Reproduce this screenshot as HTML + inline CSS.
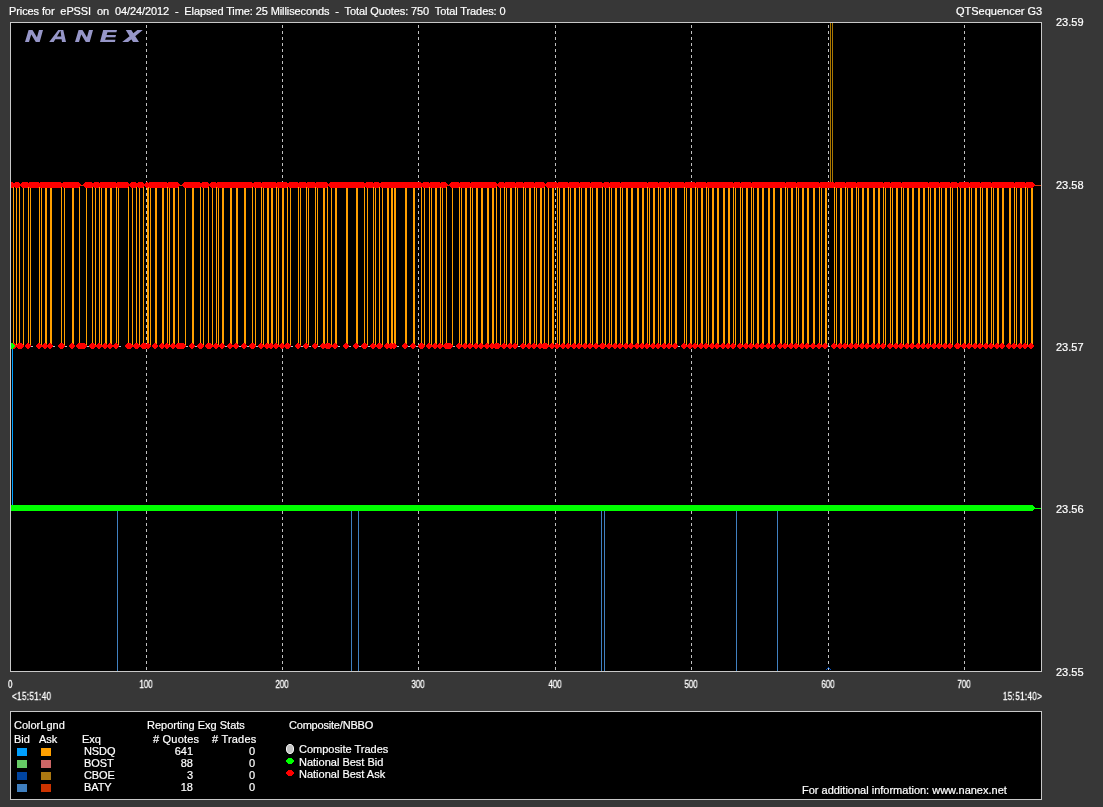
<!DOCTYPE html>
<html><head><meta charset="utf-8">
<style>
html,body{margin:0;padding:0;background:#373737;width:1103px;height:807px;overflow:hidden;}
body{position:relative;font-family:"Liberation Sans",sans-serif;color:#fff;}
.t{position:absolute;white-space:pre;font-size:11px;line-height:11px;will-change:transform;-webkit-text-stroke:0.2px #fff;}
.s{position:absolute;white-space:pre;font-size:10px;line-height:10px;transform:scaleX(0.8);will-change:transform;-webkit-text-stroke:0.3px #fff;}
.r{text-align:right;}
.c{text-align:center;}
svg{position:absolute;left:0;top:0;}
</style></head><body>
<svg width="1103" height="807" shape-rendering="crispEdges">
<rect x="10" y="22" width="1032" height="650" fill="#c8c8c8"/>
<rect x="11" y="23" width="1030" height="648" fill="#000"/>
<defs><clipPath id="cp"><rect x="11" y="23" width="1030" height="648"/></clipPath></defs>
<g clip-path="url(#cp)">
<g fill="#9696c8" shape-rendering="geometricPrecision">
<path d="M25 42L28.6 30H32.5L29 42Z M35.6 42L39 30H43L39.7 42Z M28.6 30H32.5L39.7 42H35.8Z"/>
<path d="M75 42L78.6 30H82.5L79 42Z M85.6 42L89 30H93L89.7 42Z M78.6 30H82.5L89.7 42H85.8Z"/>
<path d="M49.2 42L58.3 30H60.8L53.7 42Z M62 42L60.4 30H63.3L66 42Z M52 39.2L54 36.6H62.1L62.6 39.2Z"/>
<path d="M100 42L103.2 30H117L116.4 32.2H107.5L106.6 35H116L115.4 37.3H106L105.1 39.7H115.4L115 42Z"/>
<path d="M125.8 30H131.3L139 42H133Z M137.4 30H142.8L128.1 42H122.2Z"/>
</g>
<path d="M146 25V671M282 25V671M418 25V671M555 25V671M691 25V671M828 25V671M964 25V671" stroke="#c0c0c0" stroke-width="1" stroke-dasharray="3 3" transform="translate(0.5 0)"/>
<path d="M830 22h1v161h-1ZM832 22h1v161h-1Z" fill="#aa7700"/>
<path d="M13 185h1v161h-1ZM16 185h1v161h-1ZM19 185h1v161h-1ZM23 185h1v161h-1ZM28 185h1v161h-1ZM30 185h1v161h-1ZM39 185h1v161h-1ZM41 185h1v161h-1ZM45 185h1v161h-1ZM46 185h1v161h-1ZM50 185h1v161h-1ZM51 185h1v161h-1ZM61 185h1v161h-1ZM64 185h1v161h-1ZM72 185h1v161h-1ZM73 185h1v161h-1ZM79 185h1v161h-1ZM86 185h1v161h-1ZM92 185h1v161h-1ZM95 185h1v161h-1ZM99 185h1v161h-1ZM101 185h1v161h-1ZM105 185h1v161h-1ZM106 185h1v161h-1ZM110 185h1v161h-1ZM111 185h1v161h-1ZM116 185h1v161h-1ZM118 185h1v161h-1ZM128 185h1v161h-1ZM132 185h1v161h-1ZM136 185h1v161h-1ZM139 185h1v161h-1ZM143 185h1v161h-1ZM147 185h1v161h-1ZM148 185h1v161h-1ZM150 185h1v161h-1ZM155 185h1v161h-1ZM156 185h1v161h-1ZM162 185h1v161h-1ZM163 185h1v161h-1ZM167 185h1v161h-1ZM169 185h1v161h-1ZM173 185h1v161h-1ZM174 185h1v161h-1ZM178 185h1v161h-1ZM185 185h1v161h-1ZM192 185h1v161h-1ZM193 185h1v161h-1ZM200 185h1v161h-1ZM203 185h1v161h-1ZM208 185h1v161h-1ZM212 185h1v161h-1ZM216 185h1v161h-1ZM218 185h1v161h-1ZM222 185h1v161h-1ZM223 185h1v161h-1ZM230 185h1v161h-1ZM231 185h1v161h-1ZM236 185h1v161h-1ZM237 185h1v161h-1ZM244 185h1v161h-1ZM245 185h1v161h-1ZM252 185h1v161h-1ZM255 185h1v161h-1ZM261 185h1v161h-1ZM263 185h1v161h-1ZM267 185h1v161h-1ZM268 185h1v161h-1ZM271 185h1v161h-1ZM272 185h1v161h-1ZM276 185h1v161h-1ZM278 185h1v161h-1ZM282 185h1v161h-1ZM283 185h1v161h-1ZM287 185h1v161h-1ZM290 185h1v161h-1ZM298 185h1v161h-1ZM300 185h1v161h-1ZM306 185h1v161h-1ZM308 185h1v161h-1ZM315 185h1v161h-1ZM317 185h1v161h-1ZM323 185h1v161h-1ZM324 185h1v161h-1ZM327 185h1v161h-1ZM331 185h1v161h-1ZM335 185h1v161h-1ZM336 185h1v161h-1ZM346 185h1v161h-1ZM347 185h1v161h-1ZM356 185h1v161h-1ZM357 185h1v161h-1ZM364 185h1v161h-1ZM367 185h1v161h-1ZM373 185h1v161h-1ZM375 185h1v161h-1ZM379 185h1v161h-1ZM382 185h1v161h-1ZM387 185h1v161h-1ZM388 185h1v161h-1ZM391 185h1v161h-1ZM392 185h1v161h-1ZM394 185h1v161h-1ZM395 185h1v161h-1ZM405 185h1v161h-1ZM406 185h1v161h-1ZM413 185h1v161h-1ZM414 185h1v161h-1ZM421 185h1v161h-1ZM424 185h1v161h-1ZM429 185h1v161h-1ZM431 185h1v161h-1ZM435 185h1v161h-1ZM436 185h1v161h-1ZM440 185h1v161h-1ZM442 185h1v161h-1ZM446 185h1v161h-1ZM452 185h1v161h-1ZM459 185h1v161h-1ZM461 185h1v161h-1ZM465 185h1v161h-1ZM466 185h1v161h-1ZM470 185h1v161h-1ZM472 185h1v161h-1ZM476 185h1v161h-1ZM477 185h1v161h-1ZM481 185h1v161h-1ZM482 185h1v161h-1ZM487 185h1v161h-1ZM488 185h1v161h-1ZM492 185h1v161h-1ZM493 185h1v161h-1ZM496 185h1v161h-1ZM500 185h1v161h-1ZM504 185h1v161h-1ZM506 185h1v161h-1ZM510 185h1v161h-1ZM511 185h1v161h-1ZM515 185h1v161h-1ZM517 185h1v161h-1ZM523 185h1v161h-1ZM525 185h1v161h-1ZM529 185h1v161h-1ZM530 185h1v161h-1ZM534 185h1v161h-1ZM536 185h1v161h-1ZM540 185h1v161h-1ZM541 185h1v161h-1ZM544 185h1v161h-1ZM548 185h1v161h-1ZM552 185h1v161h-1ZM553 185h1v161h-1ZM557 185h1v161h-1ZM559 185h1v161h-1ZM563 185h1v161h-1ZM564 185h1v161h-1ZM568 185h1v161h-1ZM570 185h1v161h-1ZM574 185h1v161h-1ZM575 185h1v161h-1ZM579 185h1v161h-1ZM581 185h1v161h-1ZM585 185h1v161h-1ZM586 185h1v161h-1ZM590 185h1v161h-1ZM592 185h1v161h-1ZM596 185h1v161h-1ZM597 185h1v161h-1ZM602 185h1v161h-1ZM605 185h1v161h-1ZM609 185h1v161h-1ZM611 185h1v161h-1ZM615 185h1v161h-1ZM616 185h1v161h-1ZM620 185h1v161h-1ZM622 185h1v161h-1ZM626 185h1v161h-1ZM627 185h1v161h-1ZM631 185h1v161h-1ZM632 185h1v161h-1ZM637 185h1v161h-1ZM638 185h1v161h-1ZM642 185h1v161h-1ZM643 185h1v161h-1ZM647 185h1v161h-1ZM649 185h1v161h-1ZM653 185h1v161h-1ZM654 185h1v161h-1ZM658 185h1v161h-1ZM660 185h1v161h-1ZM664 185h1v161h-1ZM665 185h1v161h-1ZM669 185h1v161h-1ZM671 185h1v161h-1ZM675 185h1v161h-1ZM676 185h1v161h-1ZM684 185h1v161h-1ZM686 185h1v161h-1ZM690 185h1v161h-1ZM691 185h1v161h-1ZM695 185h1v161h-1ZM697 185h1v161h-1ZM701 185h1v161h-1ZM702 185h1v161h-1ZM706 185h1v161h-1ZM708 185h1v161h-1ZM712 185h1v161h-1ZM713 185h1v161h-1ZM717 185h1v161h-1ZM718 185h1v161h-1ZM723 185h1v161h-1ZM724 185h1v161h-1ZM728 185h1v161h-1ZM729 185h1v161h-1ZM733 185h1v161h-1ZM735 185h1v161h-1ZM740 185h1v161h-1ZM742 185h1v161h-1ZM746 185h1v161h-1ZM747 185h1v161h-1ZM751 185h1v161h-1ZM753 185h1v161h-1ZM757 185h1v161h-1ZM758 185h1v161h-1ZM762 185h1v161h-1ZM763 185h1v161h-1ZM768 185h1v161h-1ZM769 185h1v161h-1ZM773 185h1v161h-1ZM774 185h1v161h-1ZM780 185h1v161h-1ZM781 185h1v161h-1ZM785 185h1v161h-1ZM787 185h1v161h-1ZM791 185h1v161h-1ZM792 185h1v161h-1ZM796 185h1v161h-1ZM798 185h1v161h-1ZM802 185h1v161h-1ZM803 185h1v161h-1ZM807 185h1v161h-1ZM808 185h1v161h-1ZM813 185h1v161h-1ZM814 185h1v161h-1ZM819 185h1v161h-1ZM821 185h1v161h-1ZM825 185h1v161h-1ZM826 185h1v161h-1ZM834 185h1v161h-1ZM836 185h1v161h-1ZM840 185h1v161h-1ZM841 185h1v161h-1ZM845 185h1v161h-1ZM847 185h1v161h-1ZM851 185h1v161h-1ZM852 185h1v161h-1ZM856 185h1v161h-1ZM858 185h1v161h-1ZM862 185h1v161h-1ZM863 185h1v161h-1ZM867 185h1v161h-1ZM868 185h1v161h-1ZM873 185h1v161h-1ZM874 185h1v161h-1ZM878 185h1v161h-1ZM879 185h1v161h-1ZM883 185h1v161h-1ZM885 185h1v161h-1ZM890 185h1v161h-1ZM892 185h1v161h-1ZM896 185h1v161h-1ZM897 185h1v161h-1ZM901 185h1v161h-1ZM903 185h1v161h-1ZM907 185h1v161h-1ZM908 185h1v161h-1ZM912 185h1v161h-1ZM913 185h1v161h-1ZM918 185h1v161h-1ZM919 185h1v161h-1ZM923 185h1v161h-1ZM924 185h1v161h-1ZM928 185h1v161h-1ZM930 185h1v161h-1ZM934 185h1v161h-1ZM935 185h1v161h-1ZM939 185h1v161h-1ZM941 185h1v161h-1ZM945 185h1v161h-1ZM946 185h1v161h-1ZM950 185h1v161h-1ZM952 185h1v161h-1ZM957 185h1v161h-1ZM960 185h1v161h-1ZM964 185h1v161h-1ZM965 185h1v161h-1ZM969 185h1v161h-1ZM971 185h1v161h-1ZM975 185h1v161h-1ZM976 185h1v161h-1ZM980 185h1v161h-1ZM982 185h1v161h-1ZM986 185h1v161h-1ZM987 185h1v161h-1ZM991 185h1v161h-1ZM993 185h1v161h-1ZM997 185h1v161h-1ZM998 185h1v161h-1ZM1002 185h1v161h-1ZM1003 185h1v161h-1ZM1009 185h1v161h-1ZM1010 185h1v161h-1ZM1014 185h1v161h-1ZM1016 185h1v161h-1ZM1020 185h1v161h-1ZM1021 185h1v161h-1ZM1025 185h1v161h-1ZM1027 185h1v161h-1ZM1031 185h1v161h-1ZM1032 185h1v161h-1Z" fill="#ffa000"/>
<path d="M12 346h1v160h-1Z" fill="#00a0ff"/>
<path d="M117 511h1v160h-1ZM351 511h1v160h-1ZM358 511h1v160h-1ZM601 511h1v160h-1ZM604 511h1v160h-1ZM736 511h1v160h-1ZM777 511h1v160h-1Z" fill="#4080c0"/>
<path d="M11 185h1030v1h-1030Z" fill="#d04010"/>
<path d="M31 346h2v1h-2ZM53 346h2v1h-2ZM65 346h2v1h-2ZM87 346h2v1h-2ZM119 346h2v1h-2ZM186 346h2v1h-2ZM195 346h2v1h-2ZM225 346h2v1h-2ZM239 346h2v1h-2ZM247 346h2v1h-2ZM256 346h2v1h-2ZM291 346h2v1h-2ZM301 346h2v1h-2ZM309 346h2v1h-2ZM318 346h2v1h-2ZM338 346h2v1h-2ZM349 346h2v1h-2ZM359 346h2v1h-2ZM368 346h2v1h-2ZM397 346h2v1h-2ZM408 346h2v1h-2ZM416 346h2v1h-2ZM453 346h2v1h-2ZM518 346h2v1h-2ZM678 346h2v1h-2ZM828 346h2v1h-2Z" fill="#b8c4cc"/>
<path d="M10 182H13V183H14V184H15V186H14V187H13V188H10V187H9V186H8V184H9V183H10ZM15 182H19V183H20V184H21V186H20V187H19V188H15V187H14V186H13V184H14V183H15ZM22 182H28V183H29V184H30V186H29V187H28V188H22V187H21V186H20V184H21V183H22ZM29 182H39V183H40V184H41V186H40V187H39V188H29V187H28V186H27V184H28V183H29ZM40 182H45V183H46V184H47V186H46V187H45V188H40V187H39V186H38V184H39V183H40ZM45 182H50V183H51V184H52V186H51V187H50V188H45V187H44V186H43V184H44V183H45ZM50 182H61V183H62V184H63V186H62V187H61V188H50V187H49V186H48V184H49V183H50ZM63 182H72V183H73V184H74V186H73V187H72V188H63V187H62V186H61V184H62V183H63ZM72 182H79V183H80V184H81V186H80V187H79V188H72V187H71V186H70V184H71V183H72ZM85 182H92V183H93V184H94V186H93V187H92V188H85V187H84V186H83V184H84V183H85ZM94 182H99V183H100V184H101V186H100V187H99V188H94V187H93V186H92V184H93V183H94ZM100 182H105V183H106V184H107V186H106V187H105V188H100V187H99V186H98V184H99V183H100ZM105 182H110V183H111V184H112V186H111V187H110V188H105V187H104V186H103V184H104V183H105ZM110 182H116V183H117V184H118V186H117V187H116V188H110V187H109V186H108V184H109V183H110ZM117 182H128V183H129V184H130V186H129V187H128V188H117V187H116V186H115V184H116V183H117ZM131 182H136V183H137V184H138V186H137V187H136V188H131V187H130V186H129V184H130V183H131ZM138 182H143V183H144V184H145V186H144V187H143V188H138V187H137V186H136V184H137V183H138ZM146 182H148V183H149V184H150V186H149V187H148V188H146V187H145V186H144V184H145V183H146ZM149 182H155V183H156V184H157V186H156V187H155V188H149V187H148V186H147V184H148V183H149ZM155 182H162V183H163V184H164V186H163V187H162V188H155V187H154V186H153V184H154V183H155ZM162 182H167V183H168V184H169V186H168V187H167V188H162V187H161V186H160V184H161V183H162ZM168 182H173V183H174V184H175V186H174V187H173V188H168V187H167V186H166V184H167V183H168ZM173 182H178V183H179V184H180V186H179V187H178V188H173V187H172V186H171V184H172V183H173ZM184 182H192V183H193V184H194V186H193V187H192V188H184V187H183V186H182V184H183V183H184ZM192 182H200V183H201V184H202V186H201V187H200V188H192V187H191V186H190V184H191V183H192ZM202 182H208V183H209V184H210V186H209V187H208V188H202V187H201V186H200V184H201V183H202ZM211 182H216V183H217V184H218V186H217V187H216V188H211V187H210V186H209V184H210V183H211ZM217 182H222V183H223V184H224V186H223V187H222V188H217V187H216V186H215V184H216V183H217ZM222 182H230V183H231V184H232V186H231V187H230V188H222V187H221V186H220V184H221V183H222ZM230 182H236V183H237V184H238V186H237V187H236V188H230V187H229V186H228V184H229V183H230ZM236 182H244V183H245V184H246V186H245V187H244V188H236V187H235V186H234V184H235V183H236ZM244 182H252V183H253V184H254V186H253V187H252V188H244V187H243V186H242V184H243V183H244ZM254 182H261V183H262V184H263V186H262V187H261V188H254V187H253V186H252V184H253V183H254ZM262 182H267V183H268V184H269V186H268V187H267V188H262V187H261V186H260V184H261V183H262ZM267 182H271V183H272V184H273V186H272V187H271V188H267V187H266V186H265V184H266V183H267ZM271 182H276V183H277V184H278V186H277V187H276V188H271V187H270V186H269V184H270V183H271ZM277 182H282V183H283V184H284V186H283V187H282V188H277V187H276V186H275V184H276V183H277ZM282 182H287V183H288V184H289V186H288V187H287V188H282V187H281V186H280V184H281V183H282ZM289 182H298V183H299V184H300V186H299V187H298V188H289V187H288V186H287V184H288V183H289ZM299 182H306V183H307V184H308V186H307V187H306V188H299V187H298V186H297V184H298V183H299ZM307 182H315V183H316V184H317V186H316V187H315V188H307V187H306V186H305V184H306V183H307ZM316 182H323V183H324V184H325V186H324V187H323V188H316V187H315V186H314V184H315V183H316ZM323 182H327V183H328V184H329V186H328V187H327V188H323V187H322V186H321V184H322V183H323ZM330 182H335V183H336V184H337V186H336V187H335V188H330V187H329V186H328V184H329V183H330ZM335 182H346V183H347V184H348V186H347V187H346V188H335V187H334V186H333V184H334V183H335ZM346 182H356V183H357V184H358V186H357V187H356V188H346V187H345V186H344V184H345V183H346ZM356 182H364V183H365V184H366V186H365V187H364V188H356V187H355V186H354V184H355V183H356ZM366 182H373V183H374V184H375V186H374V187H373V188H366V187H365V186H364V184H365V183H366ZM374 182H379V183H380V184H381V186H380V187H379V188H374V187H373V186H372V184H373V183H374ZM381 182H387V183H388V184H389V186H388V187H387V188H381V187H380V186H379V184H380V183H381ZM387 182H391V183H392V184H393V186H392V187H391V188H387V187H386V186H385V184H386V183H387ZM391 182H394V183H395V184H396V186H395V187H394V188H391V187H390V186H389V184H390V183H391ZM394 182H405V183H406V184H407V186H406V187H405V188H394V187H393V186H392V184H393V183H394ZM405 182H413V183H414V184H415V186H414V187H413V188H405V187H404V186H403V184H404V183H405ZM413 182H421V183H422V184H423V186H422V187H421V188H413V187H412V186H411V184H412V183H413ZM423 182H429V183H430V184H431V186H430V187H429V188H423V187H422V186H421V184H422V183H423ZM430 182H435V183H436V184H437V186H436V187H435V188H430V187H429V186H428V184H429V183H430ZM435 182H440V183H441V184H442V186H441V187H440V188H435V187H434V186H433V184H434V183H435ZM441 182H446V183H447V184H448V186H447V187H446V188H441V187H440V186H439V184H440V183H441ZM451 182H459V183H460V184H461V186H460V187H459V188H451V187H450V186H449V184H450V183H451ZM460 182H465V183H466V184H467V186H466V187H465V188H460V187H459V186H458V184H459V183H460ZM465 182H470V183H471V184H472V186H471V187H470V188H465V187H464V186H463V184H464V183H465ZM471 182H476V183H477V184H478V186H477V187H476V188H471V187H470V186H469V184H470V183H471ZM476 182H481V183H482V184H483V186H482V187H481V188H476V187H475V186H474V184H475V183H476ZM481 182H487V183H488V184H489V186H488V187H487V188H481V187H480V186H479V184H480V183H481ZM487 182H492V183H493V184H494V186H493V187H492V188H487V187H486V186H485V184H486V183H487ZM492 182H496V183H497V184H498V186H497V187H496V188H492V187H491V186H490V184H491V183H492ZM499 182H504V183H505V184H506V186H505V187H504V188H499V187H498V186H497V184H498V183H499ZM505 182H510V183H511V184H512V186H511V187H510V188H505V187H504V186H503V184H504V183H505ZM510 182H515V183H516V184H517V186H516V187H515V188H510V187H509V186H508V184H509V183H510ZM516 182H523V183H524V184H525V186H524V187H523V188H516V187H515V186H514V184H515V183H516ZM524 182H529V183H530V184H531V186H530V187H529V188H524V187H523V186H522V184H523V183H524ZM529 182H534V183H535V184H536V186H535V187H534V188H529V187H528V186H527V184H528V183H529ZM535 182H540V183H541V184H542V186H541V187H540V188H535V187H534V186H533V184H534V183H535ZM540 182H544V183H545V184H546V186H545V187H544V188H540V187H539V186H538V184H539V183H540ZM547 182H552V183H553V184H554V186H553V187H552V188H547V187H546V186H545V184H546V183H547ZM552 182H557V183H558V184H559V186H558V187H557V188H552V187H551V186H550V184H551V183H552ZM558 182H563V183H564V184H565V186H564V187H563V188H558V187H557V186H556V184H557V183H558ZM563 182H568V183H569V184H570V186H569V187H568V188H563V187H562V186H561V184H562V183H563ZM569 182H574V183H575V184H576V186H575V187H574V188H569V187H568V186H567V184H568V183H569ZM574 182H579V183H580V184H581V186H580V187H579V188H574V187H573V186H572V184H573V183H574ZM580 182H585V183H586V184H587V186H586V187H585V188H580V187H579V186H578V184H579V183H580ZM585 182H590V183H591V184H592V186H591V187H590V188H585V187H584V186H583V184H584V183H585ZM591 182H596V183H597V184H598V186H597V187H596V188H591V187H590V186H589V184H590V183H591ZM596 182H602V183H603V184H604V186H603V187H602V188H596V187H595V186H594V184H595V183H596ZM604 182H609V183H610V184H611V186H610V187H609V188H604V187H603V186H602V184H603V183H604ZM610 182H615V183H616V184H617V186H616V187H615V188H610V187H609V186H608V184H609V183H610ZM615 182H620V183H621V184H622V186H621V187H620V188H615V187H614V186H613V184H614V183H615ZM621 182H626V183H627V184H628V186H627V187H626V188H621V187H620V186H619V184H620V183H621ZM626 182H631V183H632V184H633V186H632V187H631V188H626V187H625V186H624V184H625V183H626ZM631 182H637V183H638V184H639V186H638V187H637V188H631V187H630V186H629V184H630V183H631ZM637 182H642V183H643V184H644V186H643V187H642V188H637V187H636V186H635V184H636V183H637ZM642 182H647V183H648V184H649V186H648V187H647V188H642V187H641V186H640V184H641V183H642ZM648 182H653V183H654V184H655V186H654V187H653V188H648V187H647V186H646V184H647V183H648ZM653 182H658V183H659V184H660V186H659V187H658V188H653V187H652V186H651V184H652V183H653ZM659 182H664V183H665V184H666V186H665V187H664V188H659V187H658V186H657V184H658V183H659ZM664 182H669V183H670V184H671V186H670V187H669V188H664V187H663V186H662V184H663V183H664ZM670 182H675V183H676V184H677V186H676V187H675V188H670V187H669V186H668V184H669V183H670ZM675 182H684V183H685V184H686V186H685V187H684V188H675V187H674V186H673V184H674V183H675ZM685 182H690V183H691V184H692V186H691V187H690V188H685V187H684V186H683V184H684V183H685ZM690 182H695V183H696V184H697V186H696V187H695V188H690V187H689V186H688V184H689V183H690ZM696 182H701V183H702V184H703V186H702V187H701V188H696V187H695V186H694V184H695V183H696ZM701 182H706V183H707V184H708V186H707V187H706V188H701V187H700V186H699V184H700V183H701ZM707 182H712V183H713V184H714V186H713V187H712V188H707V187H706V186H705V184H706V183H707ZM712 182H717V183H718V184H719V186H718V187H717V188H712V187H711V186H710V184H711V183H712ZM717 182H723V183H724V184H725V186H724V187H723V188H717V187H716V186H715V184H716V183H717ZM723 182H728V183H729V184H730V186H729V187H728V188H723V187H722V186H721V184H722V183H723ZM728 182H733V183H734V184H735V186H734V187H733V188H728V187H727V186H726V184H727V183H728ZM734 182H740V183H741V184H742V186H741V187H740V188H734V187H733V186H732V184H733V183H734ZM741 182H746V183H747V184H748V186H747V187H746V188H741V187H740V186H739V184H740V183H741ZM746 182H751V183H752V184H753V186H752V187H751V188H746V187H745V186H744V184H745V183H746ZM752 182H757V183H758V184H759V186H758V187H757V188H752V187H751V186H750V184H751V183H752ZM757 182H762V183H763V184H764V186H763V187H762V188H757V187H756V186H755V184H756V183H757ZM762 182H768V183H769V184H770V186H769V187H768V188H762V187H761V186H760V184H761V183H762ZM768 182H773V183H774V184H775V186H774V187H773V188H768V187H767V186H766V184H767V183H768ZM773 182H780V183H781V184H782V186H781V187H780V188H773V187H772V186H771V184H772V183H773ZM780 182H785V183H786V184H787V186H786V187H785V188H780V187H779V186H778V184H779V183H780ZM786 182H791V183H792V184H793V186H792V187H791V188H786V187H785V186H784V184H785V183H786ZM791 182H796V183H797V184H798V186H797V187H796V188H791V187H790V186H789V184H790V183H791ZM797 182H802V183H803V184H804V186H803V187H802V188H797V187H796V186H795V184H796V183H797ZM802 182H807V183H808V184H809V186H808V187H807V188H802V187H801V186H800V184H801V183H802ZM807 182H813V183H814V184H815V186H814V187H813V188H807V187H806V186H805V184H806V183H807ZM813 182H819V183H820V184H821V186H820V187H819V188H813V187H812V186H811V184H812V183H813ZM820 182H825V183H826V184H827V186H826V187H825V188H820V187H819V186H818V184H819V183H820ZM825 182H834V183H835V184H836V186H835V187H834V188H825V187H824V186H823V184H824V183H825ZM835 182H840V183H841V184H842V186H841V187H840V188H835V187H834V186H833V184H834V183H835ZM840 182H845V183H846V184H847V186H846V187H845V188H840V187H839V186H838V184H839V183H840ZM846 182H851V183H852V184H853V186H852V187H851V188H846V187H845V186H844V184H845V183H846ZM851 182H856V183H857V184H858V186H857V187H856V188H851V187H850V186H849V184H850V183H851ZM857 182H862V183H863V184H864V186H863V187H862V188H857V187H856V186H855V184H856V183H857ZM862 182H867V183H868V184H869V186H868V187H867V188H862V187H861V186H860V184H861V183H862ZM867 182H873V183H874V184H875V186H874V187H873V188H867V187H866V186H865V184H866V183H867ZM873 182H878V183H879V184H880V186H879V187H878V188H873V187H872V186H871V184H872V183H873ZM878 182H883V183H884V184H885V186H884V187H883V188H878V187H877V186H876V184H877V183H878ZM884 182H890V183H891V184H892V186H891V187H890V188H884V187H883V186H882V184H883V183H884ZM891 182H896V183H897V184H898V186H897V187H896V188H891V187H890V186H889V184H890V183H891ZM896 182H901V183H902V184H903V186H902V187H901V188H896V187H895V186H894V184H895V183H896ZM902 182H907V183H908V184H909V186H908V187H907V188H902V187H901V186H900V184H901V183H902ZM907 182H912V183H913V184H914V186H913V187H912V188H907V187H906V186H905V184H906V183H907ZM912 182H918V183H919V184H920V186H919V187H918V188H912V187H911V186H910V184H911V183H912ZM918 182H923V183H924V184H925V186H924V187H923V188H918V187H917V186H916V184H917V183H918ZM923 182H928V183H929V184H930V186H929V187H928V188H923V187H922V186H921V184H922V183H923ZM929 182H934V183H935V184H936V186H935V187H934V188H929V187H928V186H927V184H928V183H929ZM934 182H939V183H940V184H941V186H940V187H939V188H934V187H933V186H932V184H933V183H934ZM940 182H945V183H946V184H947V186H946V187H945V188H940V187H939V186H938V184H939V183H940ZM945 182H950V183H951V184H952V186H951V187H950V188H945V187H944V186H943V184H944V183H945ZM951 182H957V183H958V184H959V186H958V187H957V188H951V187H950V186H949V184H950V183H951ZM959 182H964V183H965V184H966V186H965V187H964V188H959V187H958V186H957V184H958V183H959ZM964 182H969V183H970V184H971V186H970V187H969V188H964V187H963V186H962V184H963V183H964ZM970 182H975V183H976V184H977V186H976V187H975V188H970V187H969V186H968V184H969V183H970ZM975 182H980V183H981V184H982V186H981V187H980V188H975V187H974V186H973V184H974V183H975ZM981 182H986V183H987V184H988V186H987V187H986V188H981V187H980V186H979V184H980V183H981ZM986 182H991V183H992V184H993V186H992V187H991V188H986V187H985V186H984V184H985V183H986ZM992 182H997V183H998V184H999V186H998V187H997V188H992V187H991V186H990V184H991V183H992ZM997 182H1002V183H1003V184H1004V186H1003V187H1002V188H997V187H996V186H995V184H996V183H997ZM1002 182H1009V183H1010V184H1011V186H1010V187H1009V188H1002V187H1001V186H1000V184H1001V183H1002ZM1009 182H1014V183H1015V184H1016V186H1015V187H1014V188H1009V187H1008V186H1007V184H1008V183H1009ZM1015 182H1020V183H1021V184H1022V186H1021V187H1020V188H1015V187H1014V186H1013V184H1014V183H1015ZM1020 182H1025V183H1026V184H1027V186H1026V187H1025V188H1020V187H1019V186H1018V184H1019V183H1020ZM1026 182H1031V183H1032V184H1033V186H1032V187H1031V188H1026V187H1025V186H1024V184H1025V183H1026ZM1031 182H1033V183H1034V184H1035V186H1034V187H1033V188H1031V187H1030V186H1029V184H1030V183H1031Z" fill="#ff0000"/>
<path d="M12 343H15V344H16V345H17V347H16V348H15V349H12V348H11V347H10V345H11V344H12ZM18 343H22V344H23V345H24V347H23V348H22V349H18V348H17V347H16V345H17V344H18ZM27 343H29V344H30V345H31V347H30V348H29V349H27V348H26V347H25V345H26V344H27ZM38 343H40V344H41V345H42V347H41V348H40V349H38V348H37V347H36V345H37V344H38ZM44 343H46V344H47V345H48V347H47V348H46V349H44V348H43V347H42V345H43V344H44ZM49 343H51V344H52V345H53V347H52V348H51V349H49V348H48V347H47V345H48V344H49ZM60 343H63V344H64V345H65V347H64V348H63V349H60V348H59V347H58V345H59V344H60ZM71 343H73V344H74V345H75V347H74V348H73V349H71V348H70V347H69V345H70V344H71ZM78 343H85V344H86V345H87V347H86V348H85V349H78V348H77V347H76V345H77V344H78ZM91 343H94V344H95V345H96V347H95V348H94V349H91V348H90V347H89V345H90V344H91ZM98 343H100V344H101V345H102V347H101V348H100V349H98V348H97V347H96V345H97V344H98ZM104 343H106V344H107V345H108V347H107V348H106V349H104V348H103V347H102V345H103V344H104ZM109 343H111V344H112V345H113V347H112V348H111V349H109V348H108V347H107V345H108V344H109ZM115 343H117V344H118V345H119V347H118V348H117V349H115V348H114V347H113V345H114V344H115ZM127 343H131V344H132V345H133V347H132V348H131V349H127V348H126V347H125V345H126V344H127ZM135 343H138V344H139V345H140V347H139V348H138V349H135V348H134V347H133V345H134V344H135ZM142 343H146V344H147V345H148V347H147V348H146V349H142V348H141V347H140V345H141V344H142ZM147 343H149V344H150V345H151V347H150V348H149V349H147V348H146V347H145V345H146V344H147ZM154 343H156V344H157V345H158V347H157V348H156V349H154V348H153V347H152V345H153V344H154ZM161 343H163V344H164V345H165V347H164V348H163V349H161V348H160V347H159V345H160V344H161ZM166 343H168V344H169V345H170V347H169V348H168V349H166V348H165V347H164V345H165V344H166ZM172 343H174V344H175V345H176V347H175V348H174V349H172V348H171V347H170V345H171V344H172ZM177 343H184V344H185V345H186V347H185V348H184V349H177V348H176V347H175V345H176V344H177ZM191 343H193V344H194V345H195V347H194V348H193V349H191V348H190V347H189V345H190V344H191ZM199 343H202V344H203V345H204V347H203V348H202V349H199V348H198V347H197V345H198V344H199ZM207 343H211V344H212V345H213V347H212V348H211V349H207V348H206V347H205V345H206V344H207ZM215 343H217V344H218V345H219V347H218V348H217V349H215V348H214V347H213V345H214V344H215ZM221 343H223V344H224V345H225V347H224V348H223V349H221V348H220V347H219V345H220V344H221ZM229 343H231V344H232V345H233V347H232V348H231V349H229V348H228V347H227V345H228V344H229ZM235 343H237V344H238V345H239V347H238V348H237V349H235V348H234V347H233V345H234V344H235ZM243 343H245V344H246V345H247V347H246V348H245V349H243V348H242V347H241V345H242V344H243ZM251 343H254V344H255V345H256V347H255V348H254V349H251V348H250V347H249V345H250V344H251ZM260 343H262V344H263V345H264V347H263V348H262V349H260V348H259V347H258V345H259V344H260ZM266 343H268V344H269V345H270V347H269V348H268V349H266V348H265V347H264V345H265V344H266ZM270 343H272V344H273V345H274V347H273V348H272V349H270V348H269V347H268V345H269V344H270ZM275 343H277V344H278V345H279V347H278V348H277V349H275V348H274V347H273V345H274V344H275ZM281 343H283V344H284V345H285V347H284V348H283V349H281V348H280V347H279V345H280V344H281ZM286 343H289V344H290V345H291V347H290V348H289V349H286V348H285V347H284V345H285V344H286ZM297 343H299V344H300V345H301V347H300V348H299V349H297V348H296V347H295V345H296V344H297ZM305 343H307V344H308V345H309V347H308V348H307V349H305V348H304V347H303V345H304V344H305ZM314 343H316V344H317V345H318V347H317V348H316V349H314V348H313V347H312V345H313V344H314ZM322 343H324V344H325V345H326V347H325V348H324V349H322V348H321V347H320V345H321V344H322ZM326 343H330V344H331V345H332V347H331V348H330V349H326V348H325V347H324V345H325V344H326ZM334 343H336V344H337V345H338V347H337V348H336V349H334V348H333V347H332V345H333V344H334ZM345 343H347V344H348V345H349V347H348V348H347V349H345V348H344V347H343V345H344V344H345ZM355 343H357V344H358V345H359V347H358V348H357V349H355V348H354V347H353V345H354V344H355ZM363 343H366V344H367V345H368V347H367V348H366V349H363V348H362V347H361V345H362V344H363ZM372 343H374V344H375V345H376V347H375V348H374V349H372V348H371V347H370V345H371V344H372ZM378 343H381V344H382V345H383V347H382V348H381V349H378V348H377V347H376V345H377V344H378ZM386 343H388V344H389V345H390V347H389V348H388V349H386V348H385V347H384V345H385V344H386ZM390 343H392V344H393V345H394V347H393V348H392V349H390V348H389V347H388V345H389V344H390ZM393 343H395V344H396V345H397V347H396V348H395V349H393V348H392V347H391V345H392V344H393ZM404 343H406V344H407V345H408V347H407V348H406V349H404V348H403V347H402V345H403V344H404ZM412 343H414V344H415V345H416V347H415V348H414V349H412V348H411V347H410V345H411V344H412ZM420 343H423V344H424V345H425V347H424V348H423V349H420V348H419V347H418V345H419V344H420ZM428 343H430V344H431V345H432V347H431V348H430V349H428V348H427V347H426V345H427V344H428ZM434 343H436V344H437V345H438V347H437V348H436V349H434V348H433V347H432V345H433V344H434ZM439 343H441V344H442V345H443V347H442V348H441V349H439V348H438V347H437V345H438V344H439ZM445 343H451V344H452V345H453V347H452V348H451V349H445V348H444V347H443V345H444V344H445ZM458 343H460V344H461V345H462V347H461V348H460V349H458V348H457V347H456V345H457V344H458ZM464 343H466V344H467V345H468V347H467V348H466V349H464V348H463V347H462V345H463V344H464ZM469 343H471V344H472V345H473V347H472V348H471V349H469V348H468V347H467V345H468V344H469ZM475 343H477V344H478V345H479V347H478V348H477V349H475V348H474V347H473V345H474V344H475ZM480 343H482V344H483V345H484V347H483V348H482V349H480V348H479V347H478V345H479V344H480ZM486 343H488V344H489V345H490V347H489V348H488V349H486V348H485V347H484V345H485V344H486ZM491 343H493V344H494V345H495V347H494V348H493V349H491V348H490V347H489V345H490V344H491ZM495 343H499V344H500V345H501V347H500V348H499V349H495V348H494V347H493V345H494V344H495ZM503 343H505V344H506V345H507V347H506V348H505V349H503V348H502V347H501V345H502V344H503ZM509 343H511V344H512V345H513V347H512V348H511V349H509V348H508V347H507V345H508V344H509ZM514 343H516V344H517V345H518V347H517V348H516V349H514V348H513V347H512V345H513V344H514ZM522 343H524V344H525V345H526V347H525V348H524V349H522V348H521V347H520V345H521V344H522ZM528 343H530V344H531V345H532V347H531V348H530V349H528V348H527V347H526V345H527V344H528ZM533 343H535V344H536V345H537V347H536V348H535V349H533V348H532V347H531V345H532V344H533ZM539 343H541V344H542V345H543V347H542V348H541V349H539V348H538V347H537V345H538V344H539ZM543 343H547V344H548V345H549V347H548V348H547V349H543V348H542V347H541V345H542V344H543ZM551 343H553V344H554V345H555V347H554V348H553V349H551V348H550V347H549V345H550V344H551ZM556 343H558V344H559V345H560V347H559V348H558V349H556V348H555V347H554V345H555V344H556ZM562 343H564V344H565V345H566V347H565V348H564V349H562V348H561V347H560V345H561V344H562ZM567 343H569V344H570V345H571V347H570V348H569V349H567V348H566V347H565V345H566V344H567ZM573 343H575V344H576V345H577V347H576V348H575V349H573V348H572V347H571V345H572V344H573ZM578 343H580V344H581V345H582V347H581V348H580V349H578V348H577V347H576V345H577V344H578ZM584 343H586V344H587V345H588V347H587V348H586V349H584V348H583V347H582V345H583V344H584ZM589 343H591V344H592V345H593V347H592V348H591V349H589V348H588V347H587V345H588V344H589ZM595 343H597V344H598V345H599V347H598V348H597V349H595V348H594V347H593V345H594V344H595ZM601 343H604V344H605V345H606V347H605V348H604V349H601V348H600V347H599V345H600V344H601ZM608 343H610V344H611V345H612V347H611V348H610V349H608V348H607V347H606V345H607V344H608ZM614 343H616V344H617V345H618V347H617V348H616V349H614V348H613V347H612V345H613V344H614ZM619 343H621V344H622V345H623V347H622V348H621V349H619V348H618V347H617V345H618V344H619ZM625 343H627V344H628V345H629V347H628V348H627V349H625V348H624V347H623V345H624V344H625ZM630 343H632V344H633V345H634V347H633V348H632V349H630V348H629V347H628V345H629V344H630ZM636 343H638V344H639V345H640V347H639V348H638V349H636V348H635V347H634V345H635V344H636ZM641 343H643V344H644V345H645V347H644V348H643V349H641V348H640V347H639V345H640V344H641ZM646 343H648V344H649V345H650V347H649V348H648V349H646V348H645V347H644V345H645V344H646ZM652 343H654V344H655V345H656V347H655V348H654V349H652V348H651V347H650V345H651V344H652ZM657 343H659V344H660V345H661V347H660V348H659V349H657V348H656V347H655V345H656V344H657ZM663 343H665V344H666V345H667V347H666V348H665V349H663V348H662V347H661V345H662V344H663ZM668 343H670V344H671V345H672V347H671V348H670V349H668V348H667V347H666V345H667V344H668ZM674 343H676V344H677V345H678V347H677V348H676V349H674V348H673V347H672V345H673V344H674ZM683 343H685V344H686V345H687V347H686V348H685V349H683V348H682V347H681V345H682V344H683ZM689 343H691V344H692V345H693V347H692V348H691V349H689V348H688V347H687V345H688V344H689ZM694 343H696V344H697V345H698V347H697V348H696V349H694V348H693V347H692V345H693V344H694ZM700 343H702V344H703V345H704V347H703V348H702V349H700V348H699V347H698V345H699V344H700ZM705 343H707V344H708V345H709V347H708V348H707V349H705V348H704V347H703V345H704V344H705ZM711 343H713V344H714V345H715V347H714V348H713V349H711V348H710V347H709V345H710V344H711ZM716 343H718V344H719V345H720V347H719V348H718V349H716V348H715V347H714V345H715V344H716ZM722 343H724V344H725V345H726V347H725V348H724V349H722V348H721V347H720V345H721V344H722ZM727 343H729V344H730V345H731V347H730V348H729V349H727V348H726V347H725V345H726V344H727ZM732 343H734V344H735V345H736V347H735V348H734V349H732V348H731V347H730V345H731V344H732ZM739 343H741V344H742V345H743V347H742V348H741V349H739V348H738V347H737V345H738V344H739ZM745 343H747V344H748V345H749V347H748V348H747V349H745V348H744V347H743V345H744V344H745ZM750 343H752V344H753V345H754V347H753V348H752V349H750V348H749V347H748V345H749V344H750ZM756 343H758V344H759V345H760V347H759V348H758V349H756V348H755V347H754V345H755V344H756ZM761 343H763V344H764V345H765V347H764V348H763V349H761V348H760V347H759V345H760V344H761ZM767 343H769V344H770V345H771V347H770V348H769V349H767V348H766V347H765V345H766V344H767ZM772 343H774V344H775V345H776V347H775V348H774V349H772V348H771V347H770V345H771V344H772ZM779 343H781V344H782V345H783V347H782V348H781V349H779V348H778V347H777V345H778V344H779ZM784 343H786V344H787V345H788V347H787V348H786V349H784V348H783V347H782V345H783V344H784ZM790 343H792V344H793V345H794V347H793V348H792V349H790V348H789V347H788V345H789V344H790ZM795 343H797V344H798V345H799V347H798V348H797V349H795V348H794V347H793V345H794V344H795ZM801 343H803V344H804V345H805V347H804V348H803V349H801V348H800V347H799V345H800V344H801ZM806 343H808V344H809V345H810V347H809V348H808V349H806V348H805V347H804V345H805V344H806ZM812 343H814V344H815V345H816V347H815V348H814V349H812V348H811V347H810V345H811V344H812ZM818 343H820V344H821V345H822V347H821V348H820V349H818V348H817V347H816V345H817V344H818ZM824 343H826V344H827V345H828V347H827V348H826V349H824V348H823V347H822V345H823V344H824ZM833 343H835V344H836V345H837V347H836V348H835V349H833V348H832V347H831V345H832V344H833ZM839 343H841V344H842V345H843V347H842V348H841V349H839V348H838V347H837V345H838V344H839ZM844 343H846V344H847V345H848V347H847V348H846V349H844V348H843V347H842V345H843V344H844ZM850 343H852V344H853V345H854V347H853V348H852V349H850V348H849V347H848V345H849V344H850ZM855 343H857V344H858V345H859V347H858V348H857V349H855V348H854V347H853V345H854V344H855ZM861 343H863V344H864V345H865V347H864V348H863V349H861V348H860V347H859V345H860V344H861ZM866 343H868V344H869V345H870V347H869V348H868V349H866V348H865V347H864V345H865V344H866ZM872 343H874V344H875V345H876V347H875V348H874V349H872V348H871V347H870V345H871V344H872ZM877 343H879V344H880V345H881V347H880V348H879V349H877V348H876V347H875V345H876V344H877ZM882 343H884V344H885V345H886V347H885V348H884V349H882V348H881V347H880V345H881V344H882ZM889 343H891V344H892V345H893V347H892V348H891V349H889V348H888V347H887V345H888V344H889ZM895 343H897V344H898V345H899V347H898V348H897V349H895V348H894V347H893V345H894V344H895ZM900 343H902V344H903V345H904V347H903V348H902V349H900V348H899V347H898V345H899V344H900ZM906 343H908V344H909V345H910V347H909V348H908V349H906V348H905V347H904V345H905V344H906ZM911 343H913V344H914V345H915V347H914V348H913V349H911V348H910V347H909V345H910V344H911ZM917 343H919V344H920V345H921V347H920V348H919V349H917V348H916V347H915V345H916V344H917ZM922 343H924V344H925V345H926V347H925V348H924V349H922V348H921V347H920V345H921V344H922ZM927 343H929V344H930V345H931V347H930V348H929V349H927V348H926V347H925V345H926V344H927ZM933 343H935V344H936V345H937V347H936V348H935V349H933V348H932V347H931V345H932V344H933ZM938 343H940V344H941V345H942V347H941V348H940V349H938V348H937V347H936V345H937V344H938ZM944 343H946V344H947V345H948V347H947V348H946V349H944V348H943V347H942V345H943V344H944ZM949 343H951V344H952V345H953V347H952V348H951V349H949V348H948V347H947V345H948V344H949ZM956 343H959V344H960V345H961V347H960V348H959V349H956V348H955V347H954V345H955V344H956ZM963 343H965V344H966V345H967V347H966V348H965V349H963V348H962V347H961V345H962V344H963ZM968 343H970V344H971V345H972V347H971V348H970V349H968V348H967V347H966V345H967V344H968ZM974 343H976V344H977V345H978V347H977V348H976V349H974V348H973V347H972V345H973V344H974ZM979 343H981V344H982V345H983V347H982V348H981V349H979V348H978V347H977V345H978V344H979ZM985 343H987V344H988V345H989V347H988V348H987V349H985V348H984V347H983V345H984V344H985ZM990 343H992V344H993V345H994V347H993V348H992V349H990V348H989V347H988V345H989V344H990ZM996 343H998V344H999V345H1000V347H999V348H998V349H996V348H995V347H994V345H995V344H996ZM1001 343H1003V344H1004V345H1005V347H1004V348H1003V349H1001V348H1000V347H999V345H1000V344H1001ZM1008 343H1010V344H1011V345H1012V347H1011V348H1010V349H1008V348H1007V347H1006V345H1007V344H1008ZM1013 343H1015V344H1016V345H1017V347H1016V348H1015V349H1013V348H1012V347H1011V345H1012V344H1013ZM1019 343H1021V344H1022V345H1023V347H1022V348H1021V349H1019V348H1018V347H1017V345H1018V344H1019ZM1024 343H1026V344H1027V345H1028V347H1027V348H1026V349H1024V348H1023V347H1022V345H1023V344H1024ZM1030 343H1032V344H1033V345H1034V347H1033V348H1032V349H1030V348H1029V347H1028V345H1029V344H1030Z" fill="#ff0000"/>
<path d="M11 343h2v1h1v1h1v2h-1v1h-1v1h-2Z" fill="#00ff00"/>
<path d="M11 505H1033V506H1034V507H1035V509H1034V510H1033V511H11Z" fill="#00ff00"/>
<path d="M1035 508h6v1h-6Z" fill="#00ff00"/>
<path d="M826 669h1v-1h1v-1h1v1h1v1h1v1h-1v-1h-1v-1h-1v1h-1v1h-1Z" fill="#0050c0"/>
</g>
<rect x="10" y="711" width="1032" height="89" fill="#c8c8c8"/>
<rect x="11" y="712" width="1030" height="87" fill="#000"/>
<rect x="17" y="748" width="10" height="8" fill="#00a0ff"/>
<rect x="17" y="760" width="10" height="8" fill="#66cc66"/>
<rect x="17" y="772" width="10" height="8" fill="#0044a0"/>
<rect x="17" y="784" width="10" height="8" fill="#4080c0"/>
<rect x="41" y="748" width="10" height="8" fill="#ffa000"/>
<rect x="41" y="760" width="10" height="8" fill="#cc6666"/>
<rect x="41" y="772" width="10" height="8" fill="#aa7711"/>
<rect x="41" y="784" width="10" height="8" fill="#cc3300"/>
<ellipse cx="290" cy="749" rx="3.5" ry="4.5" fill="#c0c0c0" stroke="#ffffff" stroke-width="1" shape-rendering="geometricPrecision"/>
<path d="M288 758h4v1h1v1h1v2h-1v1h-1v1h-4v-1h-1v-1h-1v-2h1v-1h1Z" fill="#00ff00"/>
<path d="M288 770h4v1h1v1h1v2h-1v1h-1v1h-4v-1h-1v-1h-1v-2h1v-1h1Z" fill="#ff0000"/>
</svg>
<div class="t" style="left:9px;top:6px;letter-spacing:-0.1px;">Prices for  ePSSI  on  04/24/2012  -  Elapsed Time: 25 Milliseconds  -  Total Quotes: 750  Total Trades: 0</div>
<div class="t" style="right:61px;top:6px;letter-spacing:0px;">QTSequencer G3</div>
<div class="t" style="left:1056px;top:17px;">23.59</div>
<div class="t" style="left:1056px;top:180px;">23.58</div>
<div class="t" style="left:1056px;top:342px;">23.57</div>
<div class="t" style="left:1056px;top:504px;">23.56</div>
<div class="t" style="left:1056px;top:667px;">23.55</div>
<div class="s" style="left:8px;top:680px;transform-origin:0 0;">0</div>
<div class="s c" style="left:126px;top:680px;width:40px;">100</div>
<div class="s c" style="left:262px;top:680px;width:40px;">200</div>
<div class="s c" style="left:398px;top:680px;width:40px;">300</div>
<div class="s c" style="left:535px;top:680px;width:40px;">400</div>
<div class="s c" style="left:671px;top:680px;width:40px;">500</div>
<div class="s c" style="left:808px;top:680px;width:40px;">600</div>
<div class="s c" style="left:944px;top:680px;width:40px;">700</div>
<div class="s" style="left:12px;top:692px;transform-origin:0 0;letter-spacing:0.5px;">&lt;15:51:40</div>
<div class="s r" style="right:61px;top:692px;transform-origin:100% 0;letter-spacing:0.5px;">15:51:40&gt;</div>
<div class="t" style="left:14px;top:720px;">ColorLgnd</div>
<div class="t" style="left:14px;top:734px;">Bid</div>
<div class="t" style="left:39px;top:734px;">Ask</div>
<div class="t" style="left:82px;top:734px;">Exq</div>
<div class="t" style="left:84px;letter-spacing:-0.1px;top:746px;">NSDQ</div>
<div class="t" style="left:84px;letter-spacing:-0.1px;top:758px;">BOST</div>
<div class="t" style="left:84px;letter-spacing:-0.1px;top:770px;">CBOE</div>
<div class="t" style="left:84px;letter-spacing:-0.1px;top:782px;">BATY</div>
<div class="t" style="left:147px;top:720px;">Reporting Exg Stats</div>
<div class="t" style="left:153px;top:734px;letter-spacing:0.2px;"># Quotes</div>
<div class="t" style="left:212px;top:734px;letter-spacing:0.2px;"># Trades</div>
<div class="t r" style="left:149px;width:44px;top:746px;">641</div>
<div class="t r" style="left:149px;width:44px;top:758px;">88</div>
<div class="t r" style="left:149px;width:44px;top:770px;">3</div>
<div class="t r" style="left:149px;width:44px;top:782px;">18</div>
<div class="t r" style="left:211px;width:44px;top:746px;">0</div>
<div class="t r" style="left:211px;width:44px;top:758px;">0</div>
<div class="t r" style="left:211px;width:44px;top:770px;">0</div>
<div class="t r" style="left:211px;width:44px;top:782px;">0</div>
<div class="t" style="left:289px;top:720px;letter-spacing:-0.2px;">Composite/NBBO</div>
<div class="t" style="left:299px;top:744px;">Composite Trades</div>
<div class="t" style="left:299px;top:757px;">National Best Bid</div>
<div class="t" style="left:299px;top:769px;">National Best Ask</div>
<div class="t" style="left:802px;top:785px;letter-spacing:0px;">For additional information: www.nanex.net</div>
</body></html>
